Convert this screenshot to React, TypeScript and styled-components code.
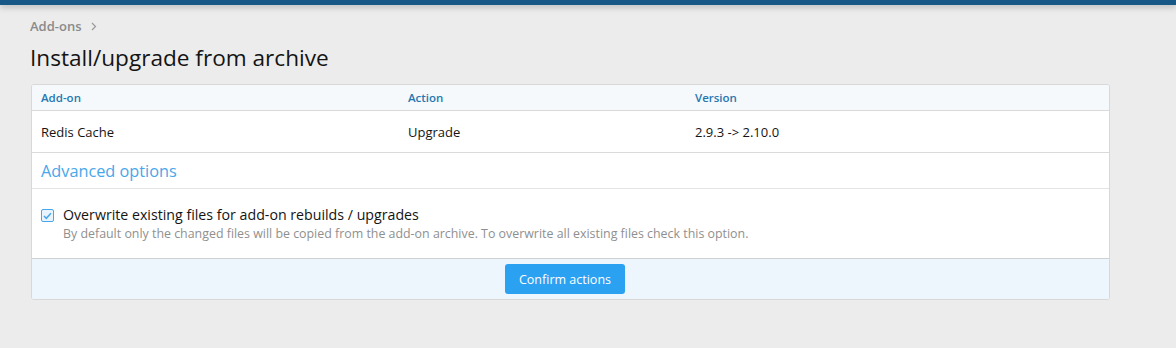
import styled, { createGlobalStyle } from 'styled-components';

const GlobalStyle = createGlobalStyle`
  body {
    margin: 0;
    background: #ececec;
    font-family: "Open Sans", "Noto Sans", sans-serif;
    color: #141414;
  }
`;

const TopBar = styled.div`
  height: 5px;
  background: #185886;
  box-shadow: 0 2px 6px rgba(0, 0, 0, 0.25);
`;

const Page = styled.div`
  padding: 11px 66px 0 30px;
`;

const Breadcrumb = styled.div`
  display: flex;
  align-items: center;
  gap: 9px;
  font-size: 13px;
  font-weight: 600;
  color: #8a8a8a;
  height: 20px;
`;

const Title = styled.h1`
  margin: 7px 0 11px;
  font-size: 22.6px;
  font-weight: 400;
  line-height: 30px;
  color: #141414;
`;

const Block = styled.div`
  margin-left: 1px;
  background: #fff;
  border: 1px solid #d8d8d8;
  border-radius: 3px;
  overflow: hidden;
`;

const Row = styled.div<{ $head?: boolean }>`
  display: grid;
  grid-template-columns: 367px 287px 1fr;
  align-items: center;
  height: ${p => (p.$head ? '25px' : '41px')};
  padding: 0 9px;
  background: ${p => (p.$head ? '#f5f9fc' : '#fff')};
  border-bottom: 1px solid #dadada;
  font-size: ${p => (p.$head ? '11.5px' : '13px')};
  font-weight: ${p => (p.$head ? 600 : 400)};
  color: ${p => (p.$head ? '#2577b1' : '#141414')};
`;

const SectionHead = styled.h3`
  margin: 0;
  height: 35px;
  display: flex;
  align-items: center;
  padding: 0 9px;
  font-size: 16.3px;
  font-weight: 400;
  color: #47a7eb;
  border-bottom: 1px solid #e4e4e4;
`;

const OptionRow = styled.div`
  display: flex;
  gap: 9px;
  padding: 16px 9px 16px;
`;

const Check = styled.span`
  flex-shrink: 0;
  width: 11px;
  height: 11px;
  margin-top: 4px;
  border: 1px solid #47a7eb;
  border-radius: 2px;
  background: #eaf4fd;
  display: flex;
  align-items: center;
  justify-content: center;
`;

const OptionText = styled.div`
  display: flex;
  flex-direction: column;
  gap: 2px;
`;

const Label = styled.span`
  font-size: 14.2px;
  line-height: 19px;
  color: #141414;
`;

const Explain = styled.span`
  font-size: 12.4px;
  line-height: 16px;
  color: #8f8f8f;
`;

const Footer = styled.div`
  display: flex;
  justify-content: center;
  padding: 5px 11px 5px 0;
  background: #edf6fd;
  border-top: 1px solid #d0d0d0;
`;

const Button = styled.button`
  width: 120px;
  height: 30px;
  border: 0;
  border-radius: 3px;
  background: #2ba1f2;
  color: #fff;
  font-family: inherit;
  font-size: 12.5px;
  cursor: pointer;
`;

export default function App() {
  return (
    <>
      <GlobalStyle />
      <TopBar />
      <Page>
        <Breadcrumb>
          <span>Add-ons</span>
          <svg width="6" height="9" viewBox="0 0 6 9">
            <path d="M1 1l3.5 3.5L1 8" fill="none" stroke="#9a9a9a" strokeWidth="1.2" />
          </svg>
        </Breadcrumb>
        <Title>Install/upgrade from archive</Title>
        <Block>
          <Row $head>
            <span>Add-on</span>
            <span>Action</span>
            <span>Version</span>
          </Row>
          <Row>
            <span>Redis Cache</span>
            <span>Upgrade</span>
            <span>2.9.3 -&gt; 2.10.0</span>
          </Row>
          <SectionHead>Advanced options</SectionHead>
          <OptionRow>
            <Check>
              <svg width="9" height="8" viewBox="0 0 9 8">
                <path d="M1 4l2.3 2.3L8 1.3" fill="none" stroke="#47a7eb" strokeWidth="1.5" />
              </svg>
            </Check>
            <OptionText>
              <Label>Overwrite existing files for add-on rebuilds / upgrades</Label>
              <Explain>
                By default only the changed files will be copied from the add-on archive. To overwrite all existing
                files check this option.
              </Explain>
            </OptionText>
          </OptionRow>
          <Footer>
            <Button>Confirm actions</Button>
          </Footer>
        </Block>
      </Page>
    </>
  );
}
